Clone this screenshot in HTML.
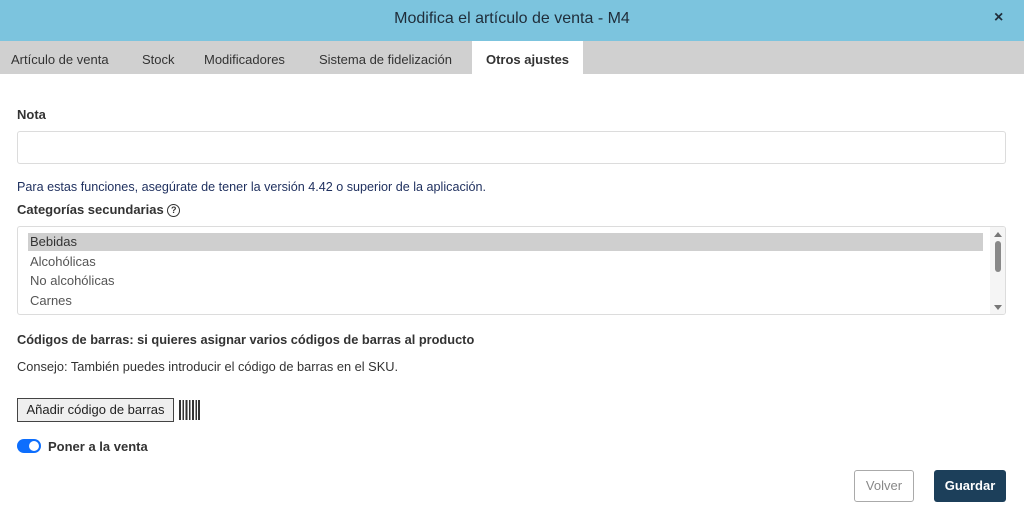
<!DOCTYPE html><html><head><meta charset="utf-8"><style>
body{margin:0;width:1024px;height:526px;background:#fff;font-family:"Liberation Sans",sans-serif;font-size:13px;color:#333;position:relative;overflow:hidden}
.a{position:absolute}
.hdr{left:0;top:0;width:1024px;height:41px;background:#7cc4de;text-align:center;line-height:38px;font-size:16px;color:#1f2d3a}
.tabs{left:0;top:41px;width:1024px;height:33px;background:#d0d0d0}
.tab{position:absolute;top:0;line-height:37px;font-size:13px;color:#333}
</style></head><body>
<div class="a hdr">Modifica el artículo de venta - M4</div>
<div class="a" style="left:994px;top:9px;font-size:16px;font-weight:bold;color:#1f2d3a">×</div>
<div class="a tabs">
<div class="tab" style="left:11px">Artículo de venta</div>
<div class="tab" style="left:142px">Stock</div>
<div class="tab" style="left:204px">Modificadores</div>
<div class="tab" style="left:319px">Sistema de fidelización</div>
<div class="tab" style="left:472px;width:111px;height:33px;background:#fff;text-align:center;font-weight:bold">Otros ajustes</div>
</div>
<div class="a" style="left:17px;top:107px;font-weight:bold">Nota</div>
<div class="a" style="left:17px;top:131px;width:987px;height:31px;border:1px solid #dcdcdc;border-radius:3px"></div>
<div class="a" style="left:17px;top:180px;color:#1e2f5e;font-size:12.6px">Para estas funciones, asegúrate de tener la versión 4.42 o superior de la aplicación.</div>
<div class="a" style="left:17px;top:202px;font-weight:bold">Categorías secundarias <span style="display:inline-block;width:11px;height:11px;border:1.3px solid #333;border-radius:50%;font-size:9px;line-height:11px;text-align:center;vertical-align:1px">?</span></div>
<div class="a" style="left:17px;top:226px;width:987px;height:87px;border:1px solid #dcdcdc;border-radius:3px;overflow:hidden;color:#555">
<div class="a" style="left:10px;top:6px;width:955px;height:18px;background:#cfcfcf"></div>
<div class="a" style="left:12px;top:7px;color:#333">Bebidas</div>
<div class="a" style="left:12px;top:27px">Alcohólicas</div>
<div class="a" style="left:12px;top:46px">No alcohólicas</div>
<div class="a" style="left:12px;top:66px">Carnes</div>
<div class="a" style="left:972px;top:0;width:15px;height:87px;background:#f5f5f5"></div>
<div class="a" style="left:976px;top:5px;border:4px solid transparent;border-bottom:5px solid #777;border-top:0"></div>
<div class="a" style="left:977px;top:14px;width:6px;height:31px;background:#888;border-radius:3px"></div>
<div class="a" style="left:976px;top:78px;border:4px solid transparent;border-top:5px solid #777;border-bottom:0"></div>
</div>
<div class="a" style="left:17px;top:332px;font-weight:bold;font-size:12.8px">Códigos de barras: si quieres asignar varios códigos de barras al producto</div>
<div class="a" style="left:17px;top:359px;font-size:12.8px">Consejo: También puedes introducir el código de barras en el SKU.</div>
<div class="a" style="left:17px;top:398px;width:155px;height:22px;border:1px solid #444;background:#efefef;line-height:22px;text-align:center;color:#222">Añadir código de barras</div>
<svg class="a" style="left:179px;top:400px" width="22" height="20"><g fill="#333"><rect x="0" width="2" height="20"/><rect x="3.5" width="1.5" height="20"/><rect x="6.5" width="2" height="20"/><rect x="10" width="1.5" height="20"/><rect x="13" width="2" height="20"/><rect x="16.5" width="1.5" height="20"/><rect x="19" width="2" height="20"/></g></svg>
<div class="a" style="left:17px;top:439px;width:24px;height:14px;border-radius:7px;background:#0d6efd"><div class="a" style="left:12px;top:2px;width:10px;height:10px;border-radius:50%;background:#fff"></div></div>
<div class="a" style="left:48px;top:439px;font-weight:bold">Poner a la venta</div>
<div class="a" style="left:854px;top:470px;width:58px;height:30px;border:1px solid #aaa;border-radius:3px;line-height:30px;text-align:center;color:#888">Volver</div>
<div class="a" style="left:934px;top:470px;width:72px;height:32px;background:#1c3f5a;border-radius:3px;line-height:32px;text-align:center;color:#fff;font-weight:bold">Guardar</div>
</body></html>
